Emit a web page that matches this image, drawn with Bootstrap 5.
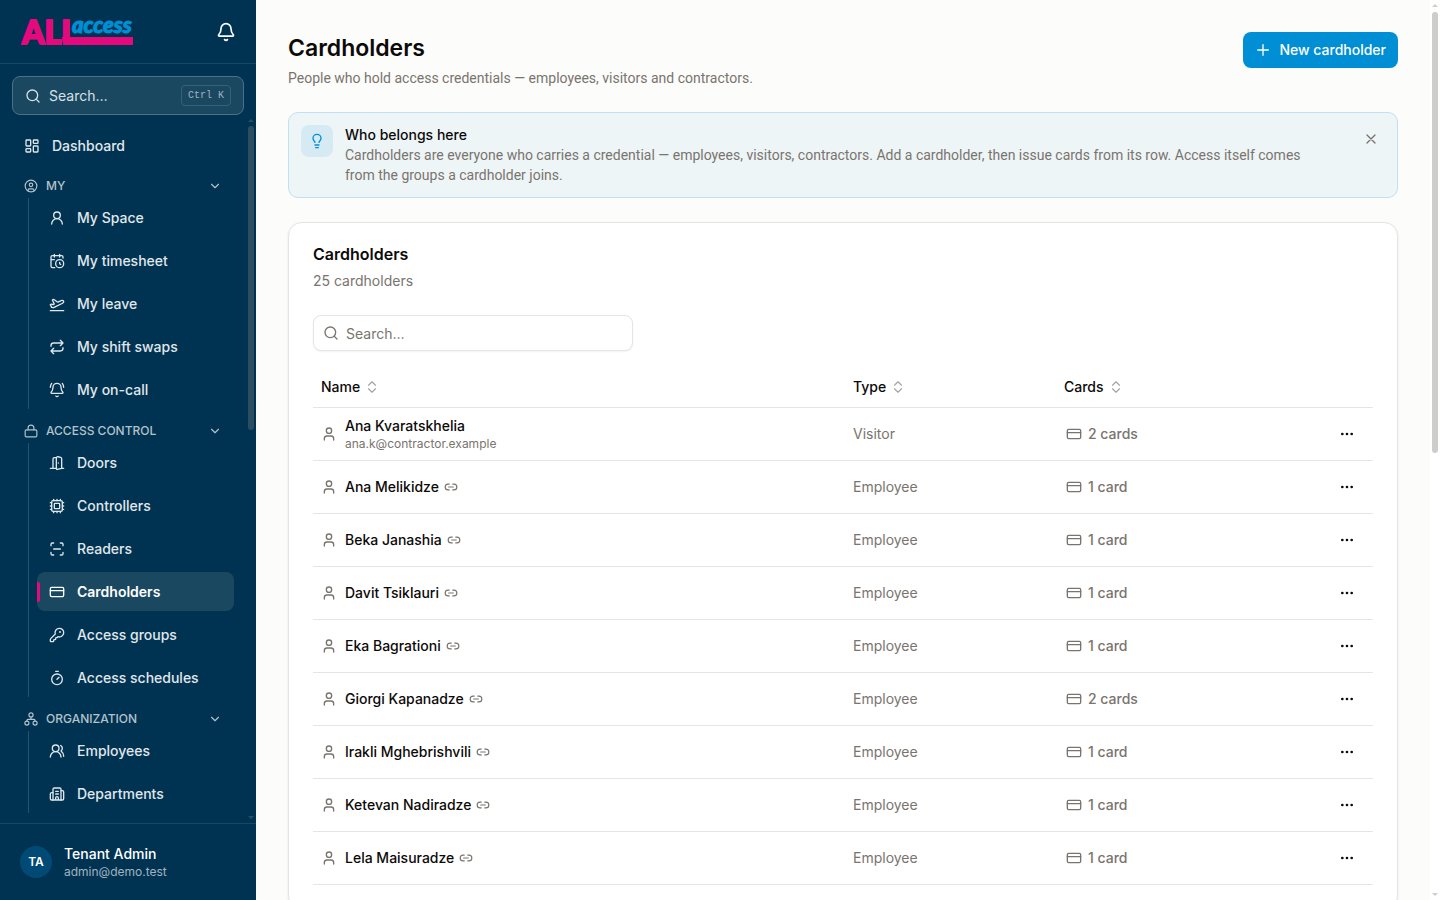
<!DOCTYPE html>
<html lang="en">
<head>
<meta charset="utf-8">
<meta name="viewport" content="width=device-width, initial-scale=1">
<title>Cardholders – ALL access</title>
<link href="https://cdn.jsdelivr.net/npm/bootstrap@5.3.0/dist/css/bootstrap.min.css" rel="stylesheet">
<style>
  :root { --ink:#0c0a09; --muted:#79746e; --line:#e5e5e3; --navy:#003352; --brand:#008fd5; --pink:#e6097e; }
  body { font-family:Inter,"Noto Sans",sans-serif; font-size:14px; line-height:20px; color:var(--ink); background:#fcfcfa; }
  svg.ico { width:16px; height:16px; flex:none; fill:none; stroke:currentColor; stroke-width:2; stroke-linecap:round; stroke-linejoin:round; }
  a { color:inherit; text-decoration:none; }
  .plain { border:0; background:none; padding:0; color:inherit; font:inherit; }
  .prose { font-family:Roboto,Inter,sans-serif; }

  .sidebar { width:256px; background:var(--navy); color:#e0e7eb; }
  .brandbar { height:64px; border-bottom:1px solid #1a4763; padding:0 20px; }
  .brandbar .plain { line-height:0; }
  .brandbar .ico { width:20px; height:20px; color:#fff; }
  .finder { height:39px; margin:12px 12px 0; padding:0 12px; border:1px solid #4d7086; border-radius:8px; background:#1a4861; color:#d9e0e5; }
  .finder kbd { font-family:"Liberation Mono",monospace; font-size:10px; line-height:15px; color:#a0b3c0; background:none; border:1px solid #36607a; border-radius:4px; padding:2px 6px; }
  .menu { min-height:0; overflow:hidden; padding-top:11px; }
  .navrow { display:flex; align-items:center; height:39px; border-radius:8px; font-weight:500; }
  .dash { margin:0 22px 0 12px; padding-left:12px; gap:12px; }
  .grp { height:24px; margin-top:9px; padding:0 34px 0 24px; gap:8px; width:100%; display:flex; align-items:center; font-size:12px; line-height:16px; font-weight:500; color:#b3c2cb; }
  .grp .ico { width:14px; height:14px; }
  .sub + .grp { margin-top:10px; }
  .sub { margin:0 22px 0 28px; padding-left:8px; border-left:1px solid #26546e; list-style:none; }
  .sub .navrow { padding-left:12px; gap:12px; margin-bottom:4px; position:relative; }
  .sub li:last-child .navrow { margin-bottom:0; }
  .sub .active { background:#1a4861; color:#fff; font-weight:600; }
  .sub .active::before { content:""; position:absolute; left:0; top:10px; width:3px; height:20px; background:var(--pink); border-radius:0 2px 2px 0; }
  .account { border-top:1px solid #1a4763; height:77px; padding:0 20px; gap:12px; }
  .avatar { width:32px; height:32px; border-radius:50%; background:#004a75; color:#fff; font-size:12px; font-weight:600; }
  .account small { font-size:12px; line-height:16px; color:#a0b3c0; }

  .content { overflow:hidden; padding:32px 42px 32px 32px; }
  h1 { font-size:23px; line-height:32px; font-weight:600; }
  .muted { color:var(--muted); }
  .btn-brand { --bs-btn-bg:var(--brand); --bs-btn-color:#fff; --bs-btn-hover-bg:#007fbf; --bs-btn-hover-color:#fff; font-size:14px; line-height:20px; font-weight:500; height:36px; border:0; border-radius:8px; padding:0 12px; gap:8px; }
  .tip { margin-top:24px; padding:12px; gap:12px; border:1px solid #bee1f3; border-radius:10px; background:#eef5f7; }
  .tip .bulb { width:32px; height:32px; flex:none; border-radius:8px; background:#d6eaf4; color:var(--brand); }
  .tip .plain { margin:6px 6px 0 24px; height:16px; line-height:0; }
  .panel { margin-top:24px; background:#fff; border:1px solid var(--line); border-radius:14px; box-shadow:0 1px 3px rgba(0,0,0,.08); padding:20px 24px 24px; }
  h2 { font-size:16px; line-height:22px; font-weight:600; margin-bottom:6px; }
  .filter { position:relative; width:320px; margin-top:24px; }
  .filter .ico { position:absolute; left:10px; top:10px; color:var(--muted); }
  .filter input { height:36px; border:1px solid var(--line); border-radius:8px; padding:0 12px 0 32px; font-size:14px; line-height:20px; box-shadow:0 1px 2px rgba(0,0,0,.05); }
  .filter input::placeholder { color:var(--muted); opacity:1; }
  .people { margin:16px 0 0; table-layout:fixed; --bs-table-bg:transparent; --bs-table-color:var(--ink); }
  .people th, .people td { padding:0 8px; border-bottom:1px solid var(--line); }
  .people th { height:40px; font-weight:500; vertical-align:middle; }
  .people td { height:53px; }
  .people th .ico { width:14px; height:14px; color:#a8a5a1; margin-left:5px; }
  .people td small { font-size:12px; line-height:16px; font-weight:400; }
  .people .name { font-weight:500; line-height:20px; }
  .people .link { width:14px; height:14px; color:var(--muted); margin-left:5px; }
  .c-type { width:211px; } .c-cards { width:225px; } .c-act { width:92px; }
  .cardlink { gap:6px; padding-left:2px; }
  .people .dots { margin-right:10px; height:16px; line-height:0; }
  .dots .ico { fill:currentColor; }

  /* slim scroll rails laid over the panes */
  .rail { position:absolute; width:6px; border-radius:3px; }
  .rail-side { right:2px; top:11px; height:304px; background:#2b4d60; }
  .gutter { position:absolute; right:0; top:0; bottom:0; width:10px; background:#fff; --tone:#cdcdcb; }
  .rail-page { right:2px; top:12px; height:441px; background:#cdcdcb; }
  .menu { --tone:#2b4d60; }
  .arrow { position:absolute; right:2px; width:0; height:0; border:3px solid transparent; }
  .arrow.up { top:4px; border-top:0; border-bottom-color:var(--tone); }
  .arrow.down { bottom:4px; border-bottom:0; border-top-color:var(--tone); }
</style>
</head>
<body>
<svg class="d-none" xmlns="http://www.w3.org/2000/svg">
  <symbol id="bell" viewBox="0 0 24 24"><path d="M10.268 21a2 2 0 0 0 3.464 0M3.262 15.326A1 1 0 0 0 4 17h16a1 1 0 0 0 .74-1.673C19.41 13.956 18 12.499 18 8A6 6 0 0 0 6 8c0 4.499-1.411 5.956-2.738 7.326"/></symbol>
  <symbol id="search" viewBox="0 0 24 24"><circle cx="11" cy="11" r="8"/><path d="m21 21-4.3-4.3"/></symbol>
  <symbol id="dash" viewBox="0 0 24 24"><rect width="7" height="9" x="3" y="3" rx="1"/><rect width="7" height="5" x="14" y="3" rx="1"/><rect width="7" height="9" x="14" y="12" rx="1"/><rect width="7" height="5" x="3" y="16" rx="1"/></symbol>
  <symbol id="usercircle" viewBox="0 0 24 24"><path d="M7 20.662V19a2 2 0 0 1 2-2h6a2 2 0 0 1 2 2v1.662"/><circle cx="12" cy="10" r="3"/><circle cx="12" cy="12" r="10"/></symbol>
  <symbol id="chev" viewBox="0 0 24 24"><path d="m6 9 6 6 6-6"/></symbol>
  <symbol id="userround" viewBox="0 0 24 24"><circle cx="12" cy="8" r="5"/><path d="M20 21a8 8 0 0 0-16 0"/></symbol>
  <symbol id="calclock" viewBox="0 0 24 24"><path d="M16 14v2.2l1.6 1M16 2v4M21 7.5V6a2 2 0 0 0-2-2H5a2 2 0 0 0-2 2v14a2 2 0 0 0 2 2h3.5M3 10h5M8 2v4"/><circle cx="16" cy="16" r="6"/></symbol>
  <symbol id="plane" viewBox="0 0 24 24"><path d="M2 22h20M6.36 17.4 4 17l-2-4 1.1-.55a2 2 0 0 1 1.8 0l.17.1a2 2 0 0 0 1.8 0L8 12 5 6l.9-.45a2 2 0 0 1 2.09.2l4.02 3a2 2 0 0 0 2.1.2l4.19-2.06a2.41 2.41 0 0 1 1.73-.17L21 7a1.4 1.4 0 0 1 .87 1.99l-.38.76c-.23.46-.6.84-1.07 1.08L7.58 17.2a2 2 0 0 1-1.22.18Z"/></symbol>
  <symbol id="repeat" viewBox="0 0 24 24"><path d="m17 2 4 4-4 4M3 11v-1a4 4 0 0 1 4-4h14M7 22l-4-4 4-4M21 13v1a4 4 0 0 1-4 4H3"/></symbol>
  <symbol id="bellring" viewBox="0 0 24 24"><path d="M10.268 21a2 2 0 0 0 3.464 0M22 8c0-2.3-.8-4.3-2-6M3.262 15.326A1 1 0 0 0 4 17h16a1 1 0 0 0 .74-1.673C19.41 13.956 18 12.499 18 8A6 6 0 0 0 6 8c0 4.499-1.411 5.956-2.738 7.326M4 2C2.8 3.7 2 5.7 2 8"/></symbol>
  <symbol id="lock" viewBox="0 0 24 24"><rect width="20" height="12" x="2" y="10" rx="2"/><path d="M7 10V7a5 5 0 0 1 10 0v3"/></symbol>
  <symbol id="door" viewBox="0 0 24 24"><path d="M11 20H2M11 4.562v16.157a1 1 0 0 0 1.242.97L19 20V5.562a2 2 0 0 0-1.515-1.94l-4-1A2 2 0 0 0 11 4.561zM11 4H8a2 2 0 0 0-2 2v14M14 12h.01M22 20h-3"/></symbol>
  <symbol id="cpu" viewBox="0 0 24 24"><rect width="16" height="16" x="4" y="4" rx="2"/><rect width="8" height="8" x="8" y="8" rx="1"/><path d="M12 20v2M12 2v2M17 20v2M17 2v2M2 12h2M2 17h2M2 7h2M20 12h2M20 17h2M20 7h2M7 20v2M7 2v2"/></symbol>
  <symbol id="scan" viewBox="0 0 24 24"><path d="M3 7V5a2 2 0 0 1 2-2h2M17 3h2a2 2 0 0 1 2 2v2M21 17v2a2 2 0 0 1-2 2h-2M7 21H5a2 2 0 0 1-2-2v-2M7 12h10"/></symbol>
  <symbol id="card" viewBox="0 0 24 24"><rect width="20" height="14" x="2" y="5" rx="2"/><path d="M2 10h20"/></symbol>
  <symbol id="key" viewBox="0 0 24 24"><path d="M2.586 17.414A2 2 0 0 0 2 18.828V21a1 1 0 0 0 1 1h3a1 1 0 0 0 1-1v-1a1 1 0 0 1 1-1h1a1 1 0 0 0 1-1v-1a1 1 0 0 1 1-1h.172a2 2 0 0 0 1.414-.586l.814-.814a6.5 6.5 0 1 0-4-4z"/><circle cx="16.5" cy="7.5" r=".5" fill="currentColor"/></symbol>
  <symbol id="timer" viewBox="0 0 24 24"><path d="M10 2h4M12 14l3-3"/><circle cx="12" cy="14" r="8"/></symbol>
  <symbol id="org" viewBox="0 0 24 24"><circle cx="12" cy="5" r="3.5"/><circle cx="5" cy="19" r="3.5"/><circle cx="19" cy="19" r="3.5"/><path d="M12 8.5v4M5 15.5v-1a2 2 0 0 1 2-2h10a2 2 0 0 1 2 2v1"/></symbol>
  <symbol id="users" viewBox="0 0 24 24"><path d="M18 21a8 8 0 0 0-16 0"/><circle cx="10" cy="8" r="5"/><path d="M22 20c0-3.370-2-6.500-4-8a5 5 0 0 0-.45-8.300"/></symbol>
  <symbol id="building" viewBox="0 0 24 24"><path d="M10 12h4M10 8h4M14 21v-3a2 2 0 0 0-4 0v3M6 10H4a2 2 0 0 0-2 2v7a2 2 0 0 0 2 2h16a2 2 0 0 0 2-2V9a2 2 0 0 0-2-2h-2"/><path d="M6 21V5a2 2 0 0 1 2-2h8a2 2 0 0 1 2 2v16"/></symbol>
  <symbol id="plus" viewBox="0 0 24 24"><path d="M4 12h16M12 4v16"/></symbol>
  <symbol id="close" viewBox="0 0 24 24"><path d="M18 6 6 18M6 6l12 12"/></symbol>
  <symbol id="bulb" viewBox="0 0 24 24"><path d="M15 14c.2-1 .7-1.700 1.500-2.500 1-.9 1.500-2.200 1.500-3.500A6 6 0 0 0 6 8c0 1 .2 2.200 1.500 3.500.7.7 1.300 1.500 1.500 2.500M9 18h6M10 22h4"/></symbol>
  <symbol id="sort" viewBox="0 0 24 24"><path d="m6 15 6 6 6-6M6 9l6-6 6 6"/></symbol>
  <symbol id="user" viewBox="0 0 24 24"><path d="M19 21v-2a4 4 0 0 0-4-4H9a4 4 0 0 0-4 4v2"/><circle cx="12" cy="7" r="4"/></symbol>
  <symbol id="link" viewBox="0 0 24 24"><path d="M9 17H7A5 5 0 0 1 7 7h2M15 7h2a5 5 0 1 1 0 10h-2M8 12h8"/></symbol>
  <symbol id="dots" viewBox="0 0 24 24"><circle cx="12" cy="12" r="1"/><circle cx="19" cy="12" r="1"/><circle cx="5" cy="12" r="1"/></symbol>
</svg>

<div class="d-flex vh-100 overflow-hidden">
  <aside class="sidebar d-flex flex-column flex-shrink-0">
    <div class="brandbar d-flex align-items-center justify-content-between flex-shrink-0">
      <a href="#" aria-label="ALL access">
        <svg class="d-block overflow-visible" width="114" height="28" viewBox="0 0 114 28" font-family="Lato,sans-serif" font-weight="900">
          <text x="2" y="26" font-size="32" fill="#e6097e" stroke="#e6097e" stroke-width="2" stroke-linejoin="round">ALL</text>
          <path d="M42 19h71v8H48q-6 0-6-8z" fill="#e6097e"/>
          <text x="52" y="15" fill="#008fd5" stroke="#008fd5" stroke-width="1" font-style="italic" font-size="22">access</text>
        </svg>
      </a>
      <button class="plain" aria-label="Notifications"><svg class="ico"><use href="#bell"/></svg></button>
    </div>
    <button class="finder d-flex align-items-center gap-2 flex-shrink-0 text-start"><svg class="ico"><use href="#search"/></svg><span class="flex-grow-1">Search…</span><kbd>Ctrl K</kbd></button>
    <div class="position-relative flex-grow-1 menu">
      <nav>
        <a href="#" class="navrow dash"><svg class="ico"><use href="#dash"/></svg>Dashboard</a>
        <button class="plain grp"><svg class="ico"><use href="#usercircle"/></svg><span class="flex-grow-1 text-start">MY</span><svg class="ico"><use href="#chev"/></svg></button>
        <ul class="sub">
          <li><a href="#" class="navrow"><svg class="ico"><use href="#userround"/></svg>My Space</a></li>
          <li><a href="#" class="navrow"><svg class="ico"><use href="#calclock"/></svg>My timesheet</a></li>
          <li><a href="#" class="navrow"><svg class="ico"><use href="#plane"/></svg>My leave</a></li>
          <li><a href="#" class="navrow"><svg class="ico"><use href="#repeat"/></svg>My shift swaps</a></li>
          <li><a href="#" class="navrow"><svg class="ico"><use href="#bellring"/></svg>My on-call</a></li>
        </ul>
        <button class="plain grp"><svg class="ico"><use href="#lock"/></svg><span class="flex-grow-1 text-start">ACCESS CONTROL</span><svg class="ico"><use href="#chev"/></svg></button>
        <ul class="sub">
          <li><a href="#" class="navrow"><svg class="ico"><use href="#door"/></svg>Doors</a></li>
          <li><a href="#" class="navrow"><svg class="ico"><use href="#cpu"/></svg>Controllers</a></li>
          <li><a href="#" class="navrow"><svg class="ico"><use href="#scan"/></svg>Readers</a></li>
          <li><a href="#" class="navrow active" aria-current="page"><svg class="ico"><use href="#card"/></svg>Cardholders</a></li>
          <li><a href="#" class="navrow"><svg class="ico"><use href="#key"/></svg>Access groups</a></li>
          <li><a href="#" class="navrow"><svg class="ico"><use href="#timer"/></svg>Access schedules</a></li>
        </ul>
        <button class="plain grp"><svg class="ico"><use href="#org"/></svg><span class="flex-grow-1 text-start">ORGANIZATION</span><svg class="ico"><use href="#chev"/></svg></button>
        <ul class="sub">
          <li><a href="#" class="navrow"><svg class="ico"><use href="#users"/></svg>Employees</a></li>
          <li><a href="#" class="navrow"><svg class="ico"><use href="#building"/></svg>Departments</a></li>
        </ul>
      </nav>
      <i class="arrow up"></i><i class="rail rail-side"></i><i class="arrow down"></i>
    </div>
    <div class="account d-flex align-items-center flex-shrink-0">
      <span class="avatar d-flex align-items-center justify-content-center">TA</span>
      <div><div class="fw-medium text-white">Tenant Admin</div><small class="d-block">admin@demo.test</small></div>
    </div>
  </aside>

  <main class="position-relative flex-grow-1 content">
    <header class="d-flex justify-content-between align-items-start">
      <div><h1 class="mb-1">Cardholders</h1><p class="muted prose mb-0">People who hold access credentials — employees, visitors and contractors.</p></div>
      <button class="btn btn-brand d-flex align-items-center"><svg class="ico"><use href="#plus"/></svg>New cardholder</button>
    </header>
    <section class="tip d-flex align-items-start">
      <span class="bulb d-flex align-items-center justify-content-center"><svg class="ico"><use href="#bulb"/></svg></span>
      <div class="flex-grow-1"><div class="fw-medium">Who belongs here</div><p class="muted prose mb-0">Cardholders are everyone who carries a credential — employees, visitors, contractors. Add a cardholder, then issue cards from its row. Access itself comes from the groups a cardholder joins.</p></div>
      <button class="plain muted" aria-label="Dismiss"><svg class="ico"><use href="#close"/></svg></button>
    </section>
    <section class="panel">
      <h2>Cardholders</h2>
      <p class="muted mb-0">25 cardholders</p>
      <div class="filter"><svg class="ico"><use href="#search"/></svg><input type="search" class="form-control" placeholder="Search…" aria-label="Search cardholders"></div>
      <table class="table people align-middle">
        <thead><tr>
          <th><button class="plain d-flex align-items-center">Name <svg class="ico"><use href="#sort"/></svg></button></th>
          <th class="c-type"><button class="plain d-flex align-items-center">Type <svg class="ico"><use href="#sort"/></svg></button></th>
          <th class="c-cards"><button class="plain d-flex align-items-center">Cards <svg class="ico"><use href="#sort"/></svg></button></th>
          <th class="c-act" aria-label="Actions"></th>
        </tr></thead>
        <tbody id="rows"></tbody>
      </table>
    </section>
    <div class="gutter"><i class="arrow up"></i><i class="rail rail-page"></i><i class="arrow down"></i></div>
  </main>
</div>
<script src="https://cdn.jsdelivr.net/npm/bootstrap@5.3.0/dist/js/bootstrap.bundle.min.js"></script>
<script>
  const people = [
    ["Ana Kvaratskhelia", "Visitor", 2, "ana.k@contractor.example"],
    ["Ana Melikidze", "Employee", 1],
    ["Beka Janashia", "Employee", 1],
    ["Davit Tsiklauri", "Employee", 1],
    ["Eka Bagrationi", "Employee", 1],
    ["Giorgi Kapanadze", "Employee", 2],
    ["Irakli Mghebrishvili", "Employee", 1],
    ["Ketevan Nadiradze", "Employee", 1],
    ["Lela Maisuradze", "Employee", 1]
  ];
  const icon = (id, cls = "") => `<svg class="ico ${cls}"><use href="#${id}"/></svg>`;
  document.getElementById("rows").innerHTML = people.map(([name, type, n, mail]) => `
    <tr>
      <td><div class="d-flex align-items-center gap-2"><span class="muted d-flex">${icon("user")}</span><div>
        <div class="name d-flex align-items-center">${name}${mail ? "" : icon("link", "link")}</div>${mail ? `<small class="muted d-block">${mail}</small>` : ""}</div></div></td>
      <td class="muted">${type}</td>
      <td><a href="#" class="muted fw-medium d-flex align-items-center cardlink">${icon("card")}${n} card${n > 1 ? "s" : ""}</a></td>
      <td><button class="plain dots d-block ms-auto" aria-label="Actions for ${name}">${icon("dots")}</button></td>
    </tr>`).join("");
</script>
</body>
</html>
